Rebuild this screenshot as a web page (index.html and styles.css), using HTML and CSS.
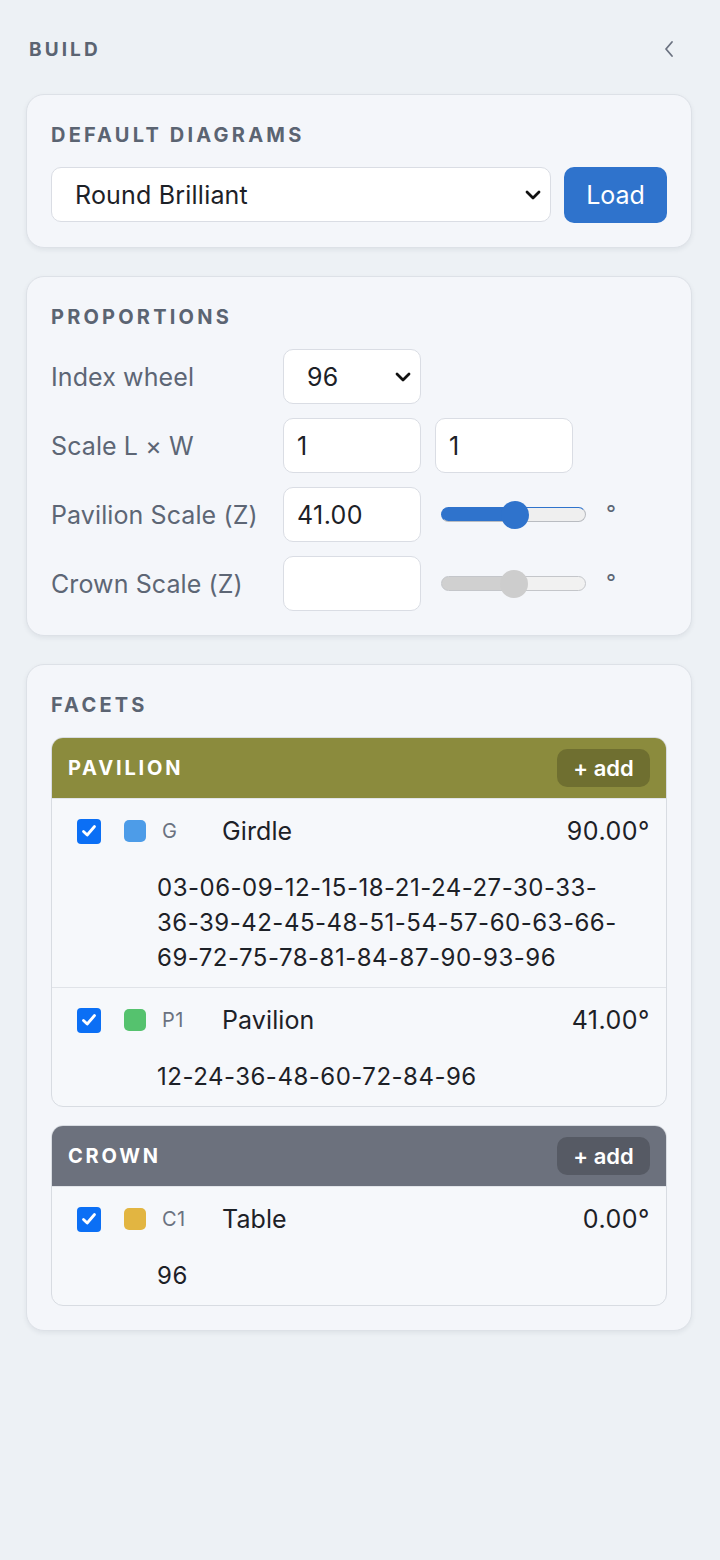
FILE: index.html
```html
<!DOCTYPE html>
<html lang="en">
<head>
<meta charset="utf-8">
<title>Build</title>
<link rel="stylesheet" href="styles.css">
</head>
<body>
<aside class="panel">
  <header class="panel-head">
    <h1 class="panel-title">Build</h1>
    <button class="collapse" type="button" aria-label="Collapse panel">
      <svg width="14" height="20" viewBox="0 0 14 20"><polyline points="10,3 4,10 10,17" fill="none" stroke="#6b7280" stroke-width="1.8" stroke-linecap="round" stroke-linejoin="round"/></svg>
    </button>
  </header>

  <section class="card">
    <h2 class="card-title">Default diagrams</h2>
    <div class="load-row">
      <div class="select-wrap grow">
        <select class="field select">
          <option>Round Brilliant</option>
          <option>Oval</option>
          <option>Emerald</option>
        </select>
        <svg class="chev" width="16" height="10" viewBox="0 0 16 10"><polyline points="2,2 8,8 14,2" fill="none" stroke="#111" stroke-width="2.8" stroke-linecap="round" stroke-linejoin="round"/></svg>
      </div>
      <button class="btn-primary" type="button">Load</button>
    </div>
  </section>

  <section class="card">
    <h2 class="card-title">Proportions</h2>
    <div class="prop-grid">
      <label class="prop-label">Index wheel</label>
      <div class="select-wrap">
        <select class="field select">
          <option>96</option>
          <option>80</option>
          <option>72</option>
          <option>64</option>
        </select>
        <svg class="chev" width="16" height="10" viewBox="0 0 16 10"><polyline points="2,2 8,8 14,2" fill="none" stroke="#111" stroke-width="2.8" stroke-linecap="round" stroke-linejoin="round"/></svg>
      </div>
      <span></span>

      <label class="prop-label">Scale L × W</label>
      <input class="field input" type="text" value="1">
      <input class="field input" type="text" value="1">

      <label class="prop-label">Pavilion Scale (Z)</label>
      <input class="field input num" type="text" value="41.00">
      <div class="slider-cell">
        <input class="range range-on" type="range" min="0" max="80" value="41" style="--p:51%">
        <span class="deg">°</span>
      </div>

      <label class="prop-label">Crown Scale (Z)</label>
      <input class="field input" type="text" value="">
      <div class="slider-cell">
        <input class="range range-off" type="range" min="0" max="80" value="40" style="--p:50%" disabled>
        <span class="deg">°</span>
      </div>
    </div>
  </section>

  <section class="card">
    <h2 class="card-title">Facets</h2>

    <div class="group">
      <div class="group-head head-pavilion">
        <span class="group-name">Pavilion</span>
        <button class="add" type="button">+ add</button>
      </div>
      <div class="facet">
        <div class="facet-main">
          <span class="check"><svg width="16" height="14" viewBox="0 0 16 14"><polyline points="2.5,7.5 6.2,11 13.5,2.5" fill="none" stroke="#fff" stroke-width="2.8" stroke-linecap="round" stroke-linejoin="round"/></svg></span>
          <span class="swatch sw-blue"></span>
          <span class="code">G</span>
          <span class="name">Girdle</span>
          <span class="angle">90.00°</span>
        </div>
        <div class="facet-seq">03-06-09-12-15-18-21-24-27-30-33-36-39-42-45-48-51-54-57-60-63-66-69-72-75-78-81-84-87-90-93-96</div>
      </div>
      <div class="facet">
        <div class="facet-main">
          <span class="check"><svg width="16" height="14" viewBox="0 0 16 14"><polyline points="2.5,7.5 6.2,11 13.5,2.5" fill="none" stroke="#fff" stroke-width="2.8" stroke-linecap="round" stroke-linejoin="round"/></svg></span>
          <span class="swatch sw-green"></span>
          <span class="code">P1</span>
          <span class="name">Pavilion</span>
          <span class="angle">41.00°</span>
        </div>
        <div class="facet-seq">12-24-36-48-60-72-84-96</div>
      </div>
    </div>

    <div class="group">
      <div class="group-head head-crown">
        <span class="group-name">Crown</span>
        <button class="add" type="button">+ add</button>
      </div>
      <div class="facet">
        <div class="facet-main">
          <span class="check"><svg width="16" height="14" viewBox="0 0 16 14"><polyline points="2.5,7.5 6.2,11 13.5,2.5" fill="none" stroke="#fff" stroke-width="2.8" stroke-linecap="round" stroke-linejoin="round"/></svg></span>
          <span class="swatch sw-gold"></span>
          <span class="code">C1</span>
          <span class="name">Table</span>
          <span class="angle">0.00°</span>
        </div>
        <div class="facet-seq">96</div>
      </div>
    </div>
  </section>
</aside>
</body>
</html>
```

FILE: styles.css
```css
* {
  box-sizing: border-box;
}

html, body {
  margin: 0;
  padding: 0;
}

body {
  background: #edf1f5;
  font-family: Inter, "Noto Sans", "Liberation Sans", sans-serif;
  color: #1d2127;
  min-height: 1560px;
}

.panel {
  padding: 30px 28px 40px 26px;
  display: flex;
  flex-direction: column;
  gap: 28px;
}

/* header row */
.panel-head {
  display: flex;
  align-items: center;
  justify-content: space-between;
  height: 38px;
  margin-bottom: -2px;
}

.panel-title {
  margin: 0 0 0 3px;
  font-size: 19px;
  font-weight: 700;
  letter-spacing: 3.1px;
  text-transform: uppercase;
  color: #5b6472;
}

.collapse {
  border: 0;
  background: none;
  padding: 0;
  margin-right: 16px;
  display: flex;
  cursor: pointer;
}

/* cards */
.card {
  background: #f4f6fa;
  border: 1px solid #dde1e7;
  border-radius: 18px;
  padding: 28px 24px 24px 24px;
  box-shadow: 0 2px 5px rgba(30, 40, 60, 0.07);
}

.card-title {
  margin: 0 0 20px 0;
  font-size: 20px;
  line-height: 24px;
  font-weight: 700;
  letter-spacing: 3.2px;
  text-transform: uppercase;
  color: #5b6472;
}

/* form fields */
.field {
  font-family: inherit;
  font-size: 25px;
  color: #1d2127;
  background: #fff;
  border: 1px solid #dadde4;
  border-radius: 10px;
  height: 55px;
  outline: none;
}

.select-wrap {
  position: relative;
  display: flex;
}

.select-wrap.grow {
  flex: 1;
}

.select {
  -webkit-appearance: none;
  appearance: none;
  width: 100%;
  padding: 0 40px 0 23px;
  letter-spacing: 0.2px;
}

.chev {
  position: absolute;
  right: 10px;
  top: 50%;
  margin-top: -5px;
  pointer-events: none;
}

.input {
  width: 138px;
  padding: 0 13px;
}

.num {
  letter-spacing: 0.4px;
}

.load-row {
  display: flex;
  gap: 13px;
}

.btn-primary {
  font-family: inherit;
  font-size: 25px;
  color: #fff;
  background: #2f73cc;
  border: 0;
  border-radius: 10px;
  height: 56px;
  width: 103px;
  cursor: pointer;
}

/* proportions grid */
.prop-grid {
  display: grid;
  grid-template-columns: 218px 138px 1fr;
  column-gap: 14px;
  row-gap: 14px;
  align-items: center;
}

.prop-label {
  font-size: 25px;
  letter-spacing: 0.1px;
  color: #5d6675;
}

.slider-cell {
  display: flex;
  align-items: center;
}

.range {
  -webkit-appearance: none;
  appearance: none;
  width: 145px;
  height: 15px;
  margin: 0 0 0 6px;
  border-radius: 8px;
  border: 1px solid #b9bcc1;
}

.range-on {
  border-color: #2f73cc #b9bcc1 #b9bcc1 #2f73cc;
  background: linear-gradient(to right, #2f73cc var(--p), #efefef var(--p));
}

.range-off {
  border-color: #c4c6ca;
  background: linear-gradient(to right, #d0d0d0 var(--p), #f1f1f1 var(--p));
}

.range::-webkit-slider-thumb {
  -webkit-appearance: none;
  width: 28px;
  height: 28px;
  border-radius: 50%;
  border: 0;
}

.range-on::-webkit-slider-thumb {
  background: #2f73cc;
}

.range-off::-webkit-slider-thumb {
  background: #cdcdcd;
}

.deg {
  margin-left: 20px;
  font-size: 22px;
  color: #5d6675;
  position: relative;
  top: -2px;
}

/* facet groups */
.group {
  border: 1px solid #d8dce2;
  border-radius: 12px;
  overflow: hidden;
  background: #f6f8fb;
}

.group + .group {
  margin-top: 18px;
}

.group-head {
  height: 61px;
  display: flex;
  align-items: center;
  justify-content: space-between;
  padding: 0 16px 0 16px;
  border-bottom: 1px solid #e2e5ea;
}

.head-pavilion {
  background: #8b8b3d;
}

.head-crown {
  background: #6c717d;
}

.group-name {
  font-size: 20px;
  font-weight: 700;
  letter-spacing: 2.8px;
  text-transform: uppercase;
  color: #fff;
}

.add {
  font-family: inherit;
  font-size: 22px;
  font-weight: 600;
  color: #fff;
  background: rgba(0, 0, 0, 0.2);
  border: 0;
  border-radius: 10px;
  height: 38px;
  width: 93px;
  padding: 0;
  cursor: pointer;
}

.facet {
  padding: 16px 16px 12px 25px;
}

.facet + .facet {
  border-top: 1px solid #e0e3e8;
}

.facet-main {
  display: flex;
  align-items: center;
  height: 32px;
}

.check {
  width: 24px;
  height: 25px;
  border-radius: 4px;
  background: #0b6ff5;
  display: flex;
  align-items: center;
  justify-content: center;
}

.swatch {
  width: 22px;
  height: 22px;
  border-radius: 5px;
  margin-left: 23px;
}

.sw-blue { background: #4d9ce8; }
.sw-green { background: #55c26e; }
.sw-gold { background: #e2b541; }

.code {
  width: 60px;
  margin-left: 16px;
  font-size: 20px;
  letter-spacing: 0.4px;
  color: #6b7280;
}

.name {
  flex: 1;
  font-size: 25px;
  letter-spacing: 0.1px;
  color: #1d2127;
}

.angle {
  font-size: 25px;
  letter-spacing: 0.5px;
  color: #1d2127;
}

.facet-seq {
  margin: 23px 24px 0 80px;
  font-size: 24px;
  line-height: 35px;
  color: #1d2127;
  letter-spacing: 0.5px;
}
```
